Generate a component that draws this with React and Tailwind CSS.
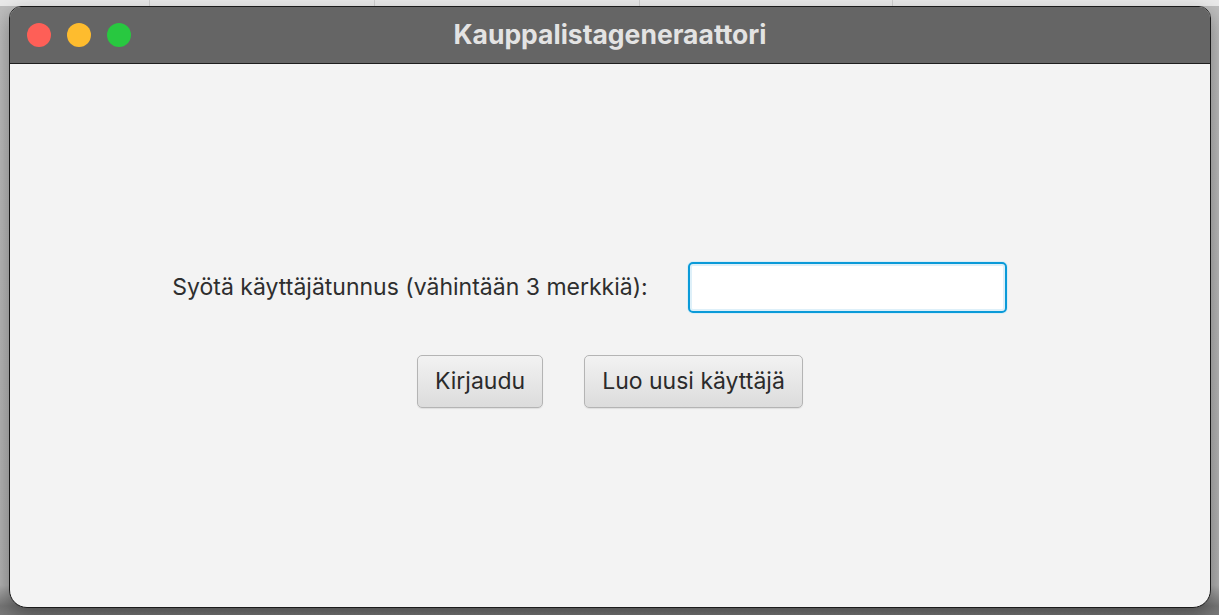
export default function App() {
  return (
    <div
      className="w-[1219px] h-[615px] overflow-hidden relative"
      style={{ fontFamily: "Inter, 'Noto Sans', sans-serif" }}
    >
      <div className="absolute inset-0 bg-[linear-gradient(to_bottom,#e9e9e9_0px,#e9e9e9_6px,#bdbdbd_6px,#b2b2b2_585px,#767676_606px,#7a7a7a_615px)]" />
      <div className="absolute left-0 right-0 top-0 h-[6px] flex">
        <div className="w-[150px] border-r border-[#cfcfcf]" />
        <div className="w-[225px] border-r border-[#cfcfcf]" />
        <div className="w-[265px] border-r border-[#cfcfcf]" />
        <div className="w-[253px] border-r border-[#cfcfcf]" />
      </div>
      <div className="relative ml-[9px] mt-[6px] w-[1202px] h-[602px] rounded-t-[12px] rounded-b-[18px] border border-[#1a1a1a] bg-[#f3f3f3] overflow-hidden flex flex-col shadow-[0_8px_20px_rgba(0,0,0,0.35)]">
        <div className="h-[57px] bg-[#656565] border-b border-[#1e1e1e] flex items-center relative shrink-0">
          <div className="flex items-center gap-[16px] pl-[17px]">
            <div className="w-[24px] h-[24px] rounded-full bg-[#fe5f57]" />
            <div className="w-[24px] h-[24px] rounded-full bg-[#febc2e]" />
            <div className="w-[24px] h-[24px] rounded-full bg-[#28c840]" />
          </div>
          <div className="absolute inset-0 flex items-center justify-center text-[26.5px] font-bold text-[#e3e3e3]">
            Kauppalistageneraattori
          </div>
        </div>
        <div className="flex-1 flex flex-col items-center pt-[197px]">
          <div className="flex items-center gap-[39px] mr-[40px]">
            <span className="text-[23px] text-[#2e2e2e]">
              Syötä käyttäjätunnus (vähintään 3 merkkiä):
            </span>
            <div className="w-[321px] h-[53px] rounded-[6px] p-[1px] bg-[#dbeef7]">
              <div className="w-full h-full rounded-[5px] border-2 border-[#0a9ad8] bg-white shadow-[inset_0_0_0_2px_#def0f9]" />
            </div>
          </div>
          <div className="flex items-center gap-[41px] mt-[41px]">
            <button className="w-[126px] h-[53px] rounded-[5px] border border-[#b4b4b4] bg-[linear-gradient(to_bottom,#f2f2f2,#dcdcdc)] text-[23px] text-[#2b2b2b] shadow-[0_1px_1px_rgba(0,0,0,0.08)]">
              Kirjaudu
            </button>
            <button className="w-[219px] h-[53px] rounded-[5px] border border-[#b4b4b4] bg-[linear-gradient(to_bottom,#f2f2f2,#dcdcdc)] text-[23px] text-[#2b2b2b] shadow-[0_1px_1px_rgba(0,0,0,0.08)]">
              Luo uusi käyttäjä
            </button>
          </div>
        </div>
      </div>
    </div>
  );
}
